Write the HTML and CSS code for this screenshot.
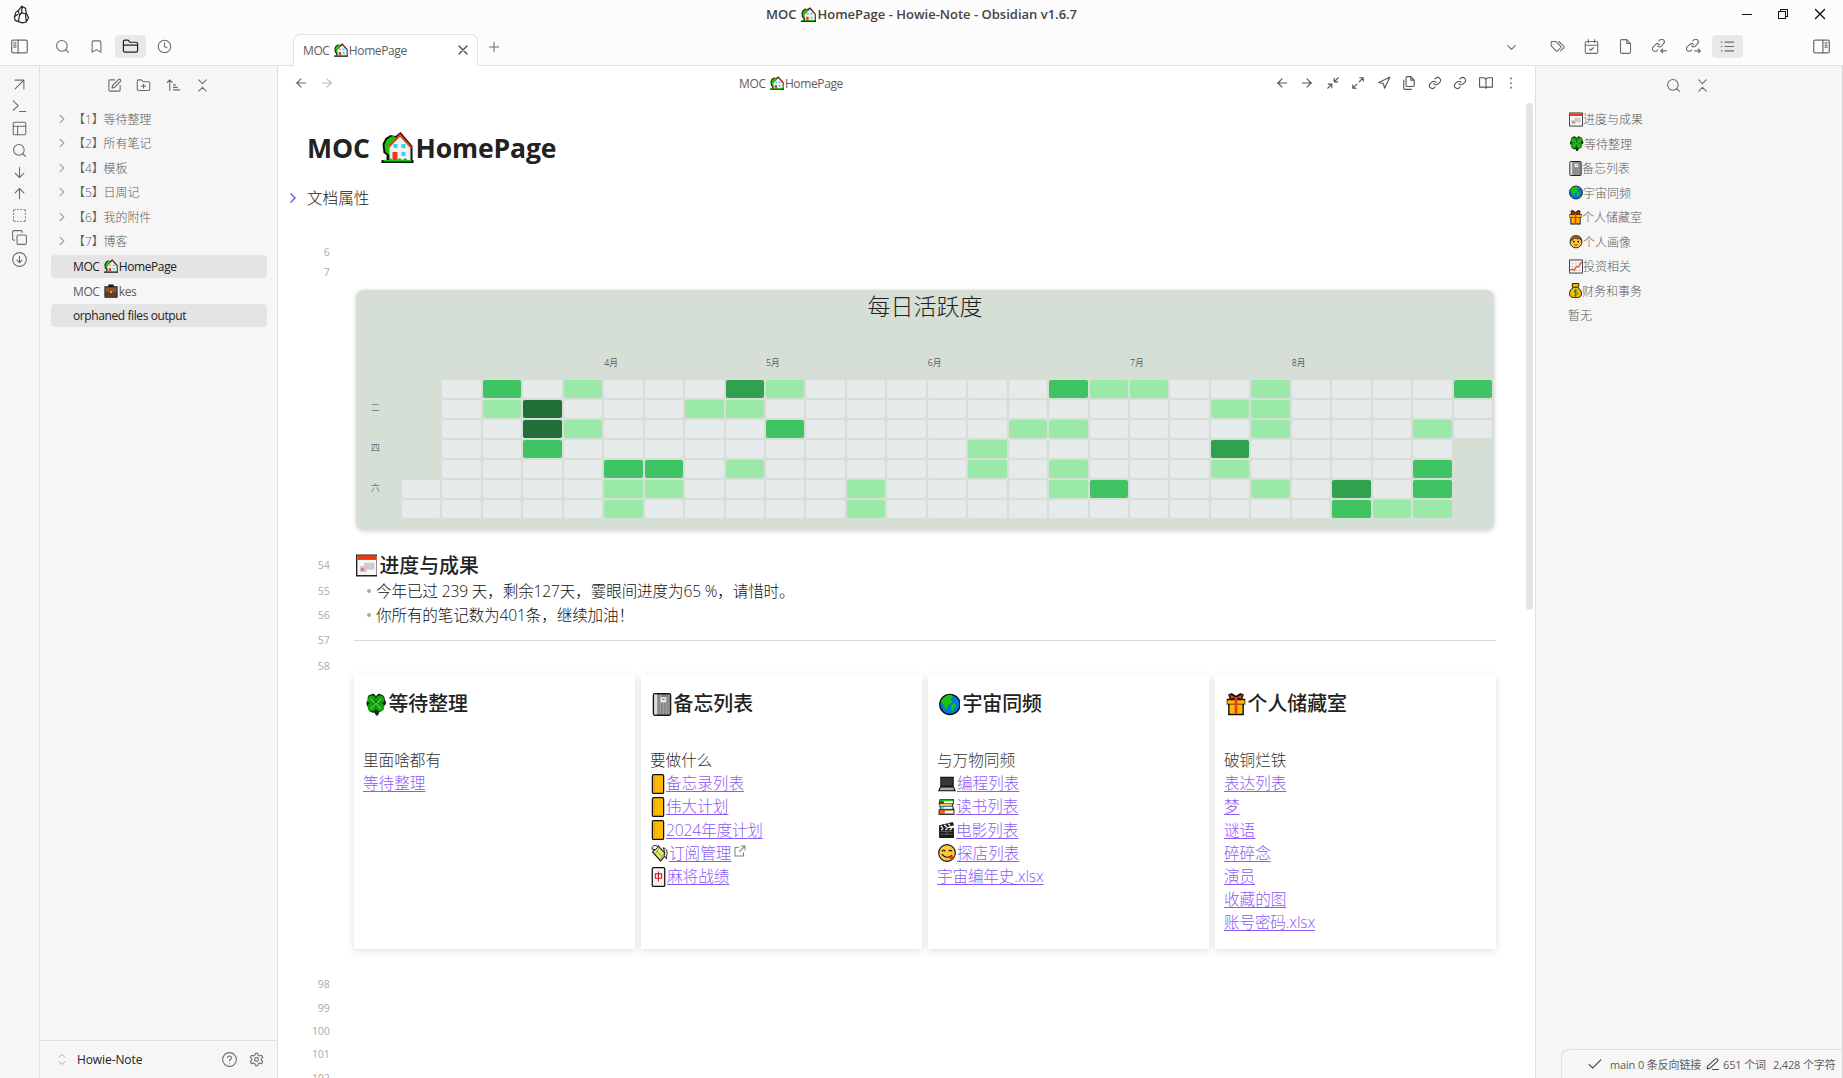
FILE: index.html
```html
<!DOCTYPE html>
<html lang="zh-CN">
<head>
<meta charset="utf-8">
<title>MOC HomePage - Howie-Note - Obsidian v1.6.7</title>
<link rel="stylesheet" href="styles.css">
</head>
<body>
<svg class="defs" aria-hidden="true">
  <!-- line icons -->
  <symbol id="search" viewBox="0 0 24 24"><circle cx="11" cy="11" r="8.5"/><path d="m21.5 21.5-4.3-4.3"/></symbol>
  <symbol id="bookmark" viewBox="0 0 24 24"><path d="m19 21-7-4-7 4V5a2 2 0 0 1 2-2h10a2 2 0 0 1 2 2v16z"/></symbol>
  <symbol id="folder" viewBox="0 0 24 24"><path d="M4 20h16a2 2 0 0 0 2-2V8a2 2 0 0 0-2-2h-7.9a2 2 0 0 1-1.7-.9l-.8-1.2A2 2 0 0 0 7.900 3H4a2 2 0 0 0-2 2v13c0 1.100.9 2 2 2Z"/><path d="M2 10h20"/></symbol>
  <symbol id="folder-plus" viewBox="0 0 24 24"><path d="M4 20h16a2 2 0 0 0 2-2V8a2 2 0 0 0-2-2h-7.900a2 2 0 0 1-1.700-.9l-.8-1.200A2 2 0 0 0 7.900 3H4a2 2 0 0 0-2 2v13a2 2 0 0 0 2 2Z"/><path d="M12 10v6M9 13h6"/></symbol>
  <symbol id="clock" viewBox="0 0 24 24"><circle cx="12" cy="12" r="10"/><path d="M12 6v6l4 2"/></symbol>
  <symbol id="panel-left" viewBox="0 0 24 24"><rect x="1" y="3" width="22" height="18" rx="2"/><path d="M10 3v18M4 7h3M4 10h3M4 13h3"/></symbol>
  <symbol id="panel-right" viewBox="0 0 24 24"><rect x="1" y="3" width="22" height="18" rx="2"/><path d="M14 3v18M17 7h3M17 10h3M17 13h3"/></symbol>
  <symbol id="x" viewBox="0 0 24 24"><path d="M18 6 6 18M6 6l12 12"/></symbol>
  <symbol id="plus" viewBox="0 0 24 24"><path d="M12 4v16M4 12h16"/></symbol>
  <symbol id="down" viewBox="0 0 24 24"><path d="m6 9 6 6 6-6"/></symbol>
  <symbol id="right" viewBox="0 0 24 24"><path d="m9 18 6-6-6-6"/></symbol>
  <symbol id="updown" viewBox="0 0 24 24"><path d="m7 15.500 5 5 5-5M7 8.500l5-5 5 5"/></symbol>
  <symbol id="arrow-ur" viewBox="0 0 24 24"><path d="M5 5h14v14M19 5 5 19"/></symbol>
  <symbol id="terminal" viewBox="0 0 24 24"><path d="m2 18 8-7.500L2 3M12 20h10"/></symbol>
  <symbol id="layout" viewBox="0 0 24 24"><rect x="2" y="2" width="20" height="20" rx="2"/><path d="M2 8.500h20M9 22V8.500"/></symbol>
  <symbol id="arrow-down" viewBox="0 0 24 24"><path d="M12 4v16M19 13l-7 7-7-7"/></symbol>
  <symbol id="arrow-up" viewBox="0 0 24 24"><path d="M12 20V4M5 11l7-7 7 7"/></symbol>
  <symbol id="arrow-left" viewBox="0 0 24 24"><path d="M20 12H4M12 19l-7-7 7-7"/></symbol>
  <symbol id="arrow-right" viewBox="0 0 24 24"><path d="M4 12h16M12 5l7 7-7 7"/></symbol>
  <symbol id="select" viewBox="0 0 24 24"><path d="M5 2.500a2.500 2.500 0 0 0-2.500 2.500M19 2.500a2.500 2.500 0 0 1 2.500 2.500M21.500 19a2.500 2.500 0 0 1-2.500 2.500M5 21.500a2.500 2.500 0 0 1-2.500-2.500M9 2.500h1M14 2.500h1M9 21.500h1M14 21.500h1M2.500 9v1M21.500 9v1M2.500 14v1M21.500 14v1"/></symbol>
  <symbol id="copy" viewBox="0 0 24 24"><rect x="8" y="8" width="15" height="15" rx="2"/><path d="M4 16a2 2 0 0 1-3-2V3a2 2 0 0 1 2-2h11a2 2 0 0 1 2 3"/></symbol>
  <symbol id="circle-down" viewBox="0 0 24 24"><circle cx="12" cy="12" r="11"/><path d="M12 7v10M8 13l4 4 4-4"/></symbol>
  <symbol id="edit" viewBox="0 0 24 24"><path d="M12 3H5a2 2 0 0 0-2 2v14a2 2 0 0 0 2 2h14a2 2 0 0 0 2-2v-7M18.400 2.600a2.100 2.100 0 0 1 3 3L12 15l-4 1 1-4Z"/></symbol>
  <symbol id="sort" viewBox="0 0 24 24"><path d="m2 7 4-4 4 4M6 3v17M12 11h3M12 15h6M12 19h10"/></symbol>
  <symbol id="collapse" viewBox="0 0 24 24"><path d="m6 21 6-6 6 6M6 3l6 6 6-6"/></symbol>
  <symbol id="minimize" viewBox="0 0 24 24"><path d="M4 14h6v6M20 10h-6V4M14 10l7-7M3 21l7-7"/></symbol>
  <symbol id="maximize" viewBox="0 0 24 24"><path d="M15 3h6v6M9 21H3v-6M21 3l-7 7M3 21l7-7"/></symbol>
  <symbol id="send" viewBox="0 0 24 24"><path d="m3 11 19-9-9 19-2-8-8-2z"/></symbol>
  <symbol id="files" viewBox="0 0 24 24"><path d="M15 1H9a2 2 0 0 0-2 2v13a2 2 0 0 0 2 2h10a2 2 0 0 0 2-2V7ZM15 1v6h6M3 7v14a2 2 0 0 0 2 2h11"/></symbol>
  <symbol id="link" viewBox="0 0 24 24"><path d="M10 13a5 5 0 0 0 7.500.5l3-3a5 5 0 0 0-7-7l-1.700 1.700M14 11a5 5 0 0 0-7.500-.5l-3 3a5 5 0 0 0 7 7l1.700-1.700"/></symbol>
  <symbol id="link-in" viewBox="0 0 24 24"><path d="M9 11a4 4 0 0 0 6 .5l3.500-4a4 4 0 0 0-6-6L11 3M12 9a4 4 0 0 0-6-.5l-4 4a4 4 0 0 0 6 6l1-1M23 19h-9M17 16l-3 3 3 3"/></symbol>
  <symbol id="link-out" viewBox="0 0 24 24"><path d="M9 11a4 4 0 0 0 6 .5l3.500-4a4 4 0 0 0-6-6L11 3M12 9a4 4 0 0 0-6-.5l-4 4a4 4 0 0 0 6 6l1-1M14 19h9M20 16l3 3-3 3"/></symbol>
  <symbol id="book" viewBox="0 0 24 24"><path d="M1 3h7a4 4 0 0 1 4 4v14a3 3 0 0 0-3-2H1zM23 3h-7a4 4 0 0 0-4 4v14a3 3 0 0 1 3-2h8z"/></symbol>
  <symbol id="more" viewBox="0 0 24 24"><path d="M12 4v.5M12 12v.5M12 20v.5"/></symbol>
  <symbol id="tags" viewBox="0 0 24 24"><path d="M2 5v6l7.500 8a1.800 1.800 0 0 0 2.600 0l4.900-5a1.800 1.800 0 0 0 0-2.600L9 4H3a1 1 0 0 0-1 1ZM5.500 8v.1M14 4l8 7.500a1.800 1.800 0 0 1 0 2.600L17 19"/></symbol>
  <symbol id="calendar" viewBox="0 0 24 24"><rect x="2" y="4" width="20" height="19" rx="2"/><path d="M7 1v5M17 1v5M2 10h20M9 16l2 2 4-4"/></symbol>
  <symbol id="file" viewBox="0 0 24 24"><path d="M14 1H6a2 2 0 0 0-2 2v18a2 2 0 0 0 2 2h12a2 2 0 0 0 2-2V7ZM14 1v6h6"/></symbol>
  <symbol id="list" viewBox="0 0 24 24"><path d="M8 5h14M8 12h14M8 19h14M2 5h1M2 12h1M2 19h1"/></symbol>
  <symbol id="help" viewBox="0 0 24 24"><circle cx="12" cy="12" r="11"/><path d="M9 9a3 3 0 0 1 6 .7c0 2-3 2.600-3 4.300M12 17.500v.1"/></symbol>
  <symbol id="gear" viewBox="0 0 24 24"><path d="M10 2h4l.7 3.200 2 1.100L20 5.200l2 3.500-2.400 2.200v2.200l2.400 2.200-2 3.500-3.300-1.100-2 1.100L14 22h-4l-.7-3.200-2-1.100L4 18.800l-2-3.500 2.400-2.200v-2.200L2 8.700l2-3.500 3.300 1.100 2-1.100Z"/><circle cx="12" cy="12" r="3"/></symbol>
  <symbol id="check" viewBox="0 0 24 24"><path d="m2 13 6 6L22 5"/></symbol>
  <symbol id="pen" viewBox="0 0 24 24"><path d="M12 22h11M17 3a2.800 2.800 0 0 1 4 4L7 20l-5 1 1-5Z"/></symbol>
  <symbol id="external" viewBox="0 0 24 24"><path d="M14 2h8v8M22 2 11 13M9 5H2v17h17v-7"/></symbol>
  <symbol id="logo" viewBox="0 0 24 24"><path d="M8 7 12.500 1.500 17 4l1 6 3 6-3 5.500-5 1-4.500-1.500L4 19.500 3 15l2-6ZM8 7l1.500 6L8 21M13 2l-1 8-2.500 3M12 10l5 1 1 10M3 15l4-3"/></symbol>

  <!-- pictograms -->
  <symbol id="e-house" viewBox="0 0 32 32"><path d="M9 3 4 6 1 12l1 9 3 2v5H0v3h32v-3h-1V14L19 0l-5 4Z" fill="#111"/><path d="m9 5-4 3-2 5 1 7 4 3 4-9 4-7-4-3Z" fill="#16c60c"/><path d="M8 15 19 4l10 11v13H8Z" fill="#f2f2f2"/><path d="M7 15 18.500 3 30 16" fill="none" stroke="#f03a17" stroke-width="2"/><path d="M12 12h4v4h-4zM20 12h4v4h-4zM20 20h4v4h-4z" fill="#31d2f7"/><path d="M11 20h5v9h-5z" fill="#f03a17"/><path d="M2 28h6l1-2 2 2h5l2-2 3 2 3-2 2 2h4v1.500H2Z" fill="#16c60c"/></symbol>
  <symbol id="e-case" viewBox="0 0 32 32"><path d="M10 5V1h12v4h9v24q0 2-2 2H3q-2 0-2-2V5Z" fill="#18110e"/><path d="M3 7h26v11H3z" fill="#8e562e"/><path d="M3 18h26v11H3z" fill="#603d30"/><circle cx="16" cy="18" r="2.500" fill="#ffb900"/></symbol>
  <symbol id="e-cal" viewBox="0 0 32 32"><path d="M1 1h30v30H1z" fill="#f7f7f7" stroke="#222" stroke-width="2"/><path d="M2 2h28v6H2z" fill="#f03a17"/><path d="M12 12h15v10H16v4H6v-9h6z" fill="#ccc"/><path d="M7 20h5v4H7z" fill="#f66"/></symbol>
  <symbol id="e-clover" viewBox="0 0 32 32"><path d="M16 4q4-6 8-2 5 1 5 7 4 6-1 9 0 8-7 9l-2 5h-3l-2-4q-9 1-10-9-4-4 0-9Q3 2 8 2q5-4 8 2Z" fill="#0a2d08"/><g fill="#13a10e"><circle cx="10" cy="9" r="6"/><circle cx="22" cy="9" r="6"/><circle cx="10" cy="20" r="6"/><circle cx="22" cy="20" r="6"/></g><path d="m8 8 16 15M24 8 8 23" stroke="#5dd657" stroke-width="1.500"/></symbol>
  <symbol id="e-note" viewBox="0 0 26 32"><rect x="1" y="1" width="24" height="30" rx="2" fill="#888" stroke="#151515" stroke-width="2"/><path d="M2 2h4v28H2z" fill="#ddd"/><path d="M7 3v26M11 2v28M15 14v16M19 14v16M23 2v28" stroke="#bbb" stroke-dasharray="2 1"/><path d="M11 6h8v7h-8z" fill="#eee"/><path d="M13 9h4" stroke="#444"/></symbol>
  <symbol id="e-globe" viewBox="0 0 32 32"><circle cx="16" cy="16" r="14.800" fill="#0078d7" stroke="#111" stroke-width="2"/><path d="M4 9q5-7 14-7l2 3-3 4 3 3-4 4-3 1-1 6-3-1-2-6-4-3ZM18 16l5-2 3 4-4 3-2 6-2-4Z" fill="#16c60c"/></symbol>
  <symbol id="e-gift" viewBox="0 0 28 32"><path d="M1 8h4L3 2l5-2 6 4 6-4 5 2-2 6h4v8h-2v15H3V16H1Z" fill="#111"/><path d="M2 10h24v5H2zM5 16h18v13H5z" fill="#ffb900"/><path d="M12 6h4v23h-4zM5 2l8 4-6 2ZM23 2l-8 4 6 2Z" fill="#f03a17"/></symbol>
  <symbol id="e-man" viewBox="0 0 32 32"><circle cx="16" cy="17" r="13.500" fill="#ffc83d" stroke="#111" stroke-width="2"/><path d="M3 15Q3 2 16 2t13 13l-4-5q-7 1-12-2-3 5-10 7Z" fill="#8e562e" stroke="#111"/><circle cx="11" cy="16" r="2"/><circle cx="21" cy="16" r="2"/><path d="M10 22q6 6 12 0Z" fill="#8e562e"/></symbol>
  <symbol id="e-chart" viewBox="0 0 32 32"><path d="M1 1h30v30H1z" fill="#f7f7f7" stroke="#222" stroke-width="2"/><path d="M8 2v28M16 2v28M24 2v28M2 9h28M2 17h28M2 25h28" stroke="#ccc"/><path d="m3 24 5-2 4 3 5-9 4 1 8-11" fill="none" stroke="#f03a17" stroke-width="2.500"/></symbol>
  <symbol id="e-bag" viewBox="0 0 28 32"><path d="M7 1h14v6l-2 3q8 4 8 12 0 9-9 9h-8q-9 0-9-9 0-8 8-12L7 7Z" fill="#ffb900" stroke="#111" stroke-width="2"/><path d="M8 9h12" stroke="#111" stroke-width="2"/><path d="M18 16h-4q-4 0-3 3t6 2-1 5h-5M14 13v16" fill="none" stroke="#10893e" stroke-width="2"/></symbol>
  <symbol id="e-ledger" viewBox="0 0 20 32"><rect x="1" y="1" width="18" height="30" rx="2" fill="#ffb900" stroke="#111" stroke-width="2"/><path d="M4 2v28" stroke="#d88c00"/></symbol>
  <symbol id="e-wings" viewBox="0 0 32 32"><path d="m14 3 15 16-11 12L3 14Z" fill="#e3e96b" stroke="#111" stroke-width="2"/><path d="m10 11 13 14m-6-20-8 12m17-2-8 12" stroke="#8a9a26" stroke-width="1.500"/><path d="M2 9Q1 1 9 2l5 2-6 6ZM23 6q9 2 7 12l-1 9-4-6 1-7Z" fill="#f2f2f2" stroke="#111" stroke-width="1.600"/></symbol>
  <symbol id="e-tile" viewBox="0 0 22 32"><rect x="1" y="1" width="20" height="30" rx="2" fill="#f2f2f2" stroke="#111" stroke-width="2"/><path d="M6 11h10v7H6zM11 7v16" fill="none" stroke="#e81224" stroke-width="1.700"/></symbol>
  <symbol id="e-laptop" viewBox="0 0 32 32"><path d="M4 3h24v17l4 9H0l4-9Z" fill="#111"/><path d="M6 5h20v14H6z" fill="#383838"/><path d="m5 22-2 5h26l-2-5Z" fill="#aaa"/></symbol>
  <symbol id="e-books" viewBox="0 0 32 32"><path d="M3 1h27v10l-2 1 3 9v10H1V21l3-2-3-8Z" fill="#333"/><path d="M4 2h24v4H4z" fill="#16c60c"/><path d="M11 5h17v4H11z" fill="#fff"/><path d="M3 10h23v4H3z" fill="#ffc83d"/><path d="M5 15h22v5H5z" fill="#69c7ff"/><path d="M12 16h15v3H12z" fill="#fff"/><path d="M3 22h26v7H3z" fill="#f7630c"/><path d="M13 23h16v5H13z" fill="#fff"/></symbol>
  <symbol id="e-clap" viewBox="0 0 32 32"><path d="m2 7 26-6 2 6-18 5h18v19H2Z" fill="#1b1b1b"/><path d="m5 8 4 4m3-6 4 4m3-6 4 4M6 16l4-3m4 3 4-3m4 3 4-3" stroke="#fff" stroke-width="2.500"/><path d="M5 19h22M5 24h22M17 19v5" stroke="#999"/></symbol>
  <symbol id="e-yum" viewBox="0 0 32 32"><circle cx="16" cy="16" r="14.800" fill="#ffc83d" stroke="#111" stroke-width="2"/><path d="M7 13q3-4 6 0m6 0q3-4 6 0M7 18q8 10 18 2" fill="none" stroke="#111" stroke-width="2"/><path d="m19 24 6-4q4 4 1 7-5 2-7-3Z" fill="#f03a17"/></symbol>
</svg>

<div class="app">
  <header class="titlebar">
    <svg class="ic logo"><use href="#logo"/></svg>
    <div class="window-title">MOC <svg class="em"><use href="#e-house"/></svg>HomePage - Howie-Note - Obsidian v1.6.7</div>
    <div class="window-controls"><i class="min"></i><i class="restore"></i><svg class="ic"><use href="#x"/></svg></div>
  </header>

  <nav class="tabbar">
    <div class="tabs-left">
      <span class="tb toggle"><svg class="ic"><use href="#panel-left"/></svg></span>
      <span class="tb"><svg class="ic"><use href="#search"/></svg></span>
      <span class="tb"><svg class="ic"><use href="#bookmark"/></svg></span>
      <span class="tb active"><svg class="ic"><use href="#folder"/></svg></span>
      <span class="tb"><svg class="ic"><use href="#clock"/></svg></span>
    </div>
    <div class="tabs-main">
      <div class="tab"><span>MOC <svg class="em"><use href="#e-house"/></svg>HomePage</span><svg class="ic"><use href="#x"/></svg></div>
      <svg class="ic new"><use href="#plus"/></svg>
      <svg class="ic more-tabs"><use href="#down"/></svg>
    </div>
    <div class="tabs-right">
      <span class="tb"><svg class="ic"><use href="#tags"/></svg></span>
      <span class="tb"><svg class="ic"><use href="#calendar"/></svg></span>
      <span class="tb"><svg class="ic"><use href="#file"/></svg></span>
      <span class="tb"><svg class="ic"><use href="#link-in"/></svg></span>
      <span class="tb"><svg class="ic"><use href="#link-out"/></svg></span>
      <span class="tb active"><svg class="ic"><use href="#list"/></svg></span>
      <span class="tb toggle"><svg class="ic"><use href="#panel-right"/></svg></span>
    </div>
  </nav>

  <div class="workspace">
    <aside class="ribbon">
      <svg class="ic"><use href="#arrow-ur"/></svg>
      <svg class="ic"><use href="#terminal"/></svg>
      <svg class="ic"><use href="#layout"/></svg>
      <svg class="ic"><use href="#search"/></svg>
      <svg class="ic"><use href="#arrow-down"/></svg>
      <svg class="ic"><use href="#arrow-up"/></svg>
      <svg class="ic"><use href="#select"/></svg>
      <svg class="ic"><use href="#copy"/></svg>
      <svg class="ic"><use href="#circle-down"/></svg>
    </aside>

    <aside class="sidebar">
      <div class="side-tools">
        <svg class="ic"><use href="#edit"/></svg>
        <svg class="ic"><use href="#folder-plus"/></svg>
        <svg class="ic"><use href="#sort"/></svg>
        <svg class="ic"><use href="#collapse"/></svg>
      </div>
      <div class="tree">
        <div class="item"><svg class="ic"><use href="#right"/></svg>【1】等待整理</div>
        <div class="item"><svg class="ic"><use href="#right"/></svg>【2】所有笔记</div>
        <div class="item"><svg class="ic"><use href="#right"/></svg>【4】模板</div>
        <div class="item"><svg class="ic"><use href="#right"/></svg>【5】日周记</div>
        <div class="item"><svg class="ic"><use href="#right"/></svg>【6】我的附件</div>
        <div class="item"><svg class="ic"><use href="#right"/></svg>【7】博客</div>
        <div class="item file selected"><span>MOC <svg class="em"><use href="#e-house"/></svg>HomePage</span></div>
        <div class="item file"><span>MOC <svg class="em"><use href="#e-case"/></svg>kes</span></div>
        <div class="item file selected"><span>orphaned files output</span></div>
      </div>
      <div class="vault">
        <svg class="ic switch"><use href="#updown"/></svg>
        <span>Howie-Note</span>
        <svg class="ic"><use href="#help"/></svg>
        <svg class="ic"><use href="#gear"/></svg>
      </div>
    </aside>

    <main class="pane">
      <div class="view-header">
        <div class="nav"><svg class="ic"><use href="#arrow-left"/></svg><svg class="ic dim"><use href="#arrow-right"/></svg></div>
        <div class="view-title">MOC <svg class="em"><use href="#e-house"/></svg>HomePage</div>
        <div class="actions">
          <svg class="ic"><use href="#arrow-left"/></svg>
          <svg class="ic"><use href="#arrow-right"/></svg>
          <svg class="ic"><use href="#minimize"/></svg>
          <svg class="ic"><use href="#maximize"/></svg>
          <svg class="ic"><use href="#send"/></svg>
          <svg class="ic"><use href="#files"/></svg>
          <svg class="ic"><use href="#link"/></svg>
          <svg class="ic"><use href="#link"/></svg>
          <svg class="ic"><use href="#book"/></svg>
          <svg class="ic dots"><use href="#more"/></svg>
        </div>
      </div>
      <div class="scroller">
      <div class="editor">
        <h1>MOC <svg class="em"><use href="#e-house"/></svg>HomePage</h1>
        <div class="props"><svg class="ic"><use href="#right"/></svg>文档属性</div>
        <div class="line first"><b>6</b></div>
        <div class="line short"><b>7</b></div>

        <section class="heat">
          <div class="heat-title">每日活跃度</div>
          <div class="months"><span class="m4">4月</span><span class="m5">5月</span><span class="m6">6月</span><span class="m7">7月</span><span class="m8">8月</span></div>
          <div class="heat-body">
            <div class="days"><span></span><span>二</span><span></span><span>四</span><span></span><span>六</span><span></span></div>
            <div class="cells" id="cells"></div>
          </div>
        </section>

        <div class="line heading"><b>54</b><h3><svg class="em"><use href="#e-cal"/></svg>进度与成果</h3></div>
        <div class="line"><b>55</b><div class="bullet">今年已过 239 天，剩余127天，霎眼间进度为65 %，请惜时。</div></div>
        <div class="line"><b>56</b><div class="bullet">你所有的笔记数为401条，继续加油！</div></div>
        <div class="line rule"><b>57</b><hr></div>
        <div class="line before-cards"><b>58</b></div>

        <div class="cards">
          <article><h3><svg class="em"><use href="#e-clover"/></svg>等待整理</h3>
            <p>里面啥都有</p><p><a>等待整理</a></p></article>
          <article><h3><svg class="em w-note"><use href="#e-note"/></svg>备忘列表</h3>
            <p>要做什么</p>
            <p><svg class="em w-ledger"><use href="#e-ledger"/></svg><a>备忘录列表</a></p>
            <p><svg class="em w-ledger"><use href="#e-ledger"/></svg><a>伟大计划</a></p>
            <p><svg class="em w-ledger"><use href="#e-ledger"/></svg><a class="latin">2024年度计划</a></p>
            <p><svg class="em"><use href="#e-wings"/></svg><a>订阅管理</a><svg class="ic ext"><use href="#external"/></svg></p>
            <p><svg class="em w-tile"><use href="#e-tile"/></svg><a>麻将战绩</a></p></article>
          <article><h3><svg class="em"><use href="#e-globe"/></svg>宇宙同频</h3>
            <p>与万物同频</p>
            <p><svg class="em wide"><use href="#e-laptop"/></svg><a>编程列表</a></p>
            <p><svg class="em"><use href="#e-books"/></svg><a>读书列表</a></p>
            <p><svg class="em"><use href="#e-clap"/></svg><a>电影列表</a></p>
            <p><svg class="em wide"><use href="#e-yum"/></svg><a>探店列表</a></p>
            <p><a class="latin">宇宙编年史.xlsx</a></p></article>
          <article><h3><svg class="em w-gift"><use href="#e-gift"/></svg>个人储藏室</h3>
            <p>破铜烂铁</p><p><a>表达列表</a></p><p><a>梦</a></p><p><a>谜语</a></p><p><a>碎碎念</a></p><p><a>演员</a></p><p><a>收藏的图</a></p><p><a class="latin">账号密码.xlsx</a></p></article>
        </div>

        <div class="line after-cards"><b>98</b></div>
        <div class="line tail"><b>99</b></div>
        <div class="line tail"><b>100</b></div>
        <div class="line tail"><b>101</b></div>
        <div class="line tail"><b>102</b></div>
      </div>
      <div class="scrollbar"></div>
      </div>
    </main>

    <aside class="outline">
      <div class="outline-tools"><svg class="ic"><use href="#search"/></svg><svg class="ic"><use href="#collapse"/></svg></div>
      <ul>
        <li><svg class="em"><use href="#e-cal"/></svg>进度与成果</li>
        <li><svg class="em w-clover"><use href="#e-clover"/></svg>等待整理</li>
        <li><svg class="em w-note"><use href="#e-note"/></svg>备忘列表</li>
        <li><svg class="em"><use href="#e-globe"/></svg>宇宙同频</li>
        <li><svg class="em w-gift"><use href="#e-gift"/></svg>个人储藏室</li>
        <li><svg class="em"><use href="#e-man"/></svg>个人画像</li>
        <li><svg class="em"><use href="#e-chart"/></svg>投资相关</li>
        <li><svg class="em w-bag"><use href="#e-bag"/></svg>财务和事务</li>
        <li>暂无</li>
      </ul>
      <div class="status">
        <svg class="ic"><use href="#check"/></svg><span class="branch">main</span><span class="back">0 条反向链接</span>
        <svg class="ic pen"><use href="#pen"/></svg><span class="words">651 个词</span><span class="chars">2,428 个字符</span>
      </div>
    </aside>
  </div>
</div>
<script src="heatmap.js"></script>
</body>
</html>
```
FILE: styles.css
```css
* { box-sizing: border-box; }
body {
  margin: 0;
  width: 1843px;
  height: 1078px;
  overflow: hidden;
  font-family: "Open Sans", "Noto Sans CJK SC", sans-serif;
  font-size: 12px;
  color: #222;
  background: #fff;
}
.defs { display: none; }
.app { display: flex; flex-direction: column; height: 1078px; }

.ic {
  width: 15px; height: 15px; flex: none; display: block;
  fill: none; stroke: #6b6b6b; stroke-width: 1.7;
  stroke-linecap: round; stroke-linejoin: round;
}
.em { display: inline-block; width: 1.17em; height: 1.2em; vertical-align: -0.24em; margin: 0 1px 0 1.5px; }
h1, h3, p, ul { margin: 0; padding: 0; }

/* title bar */
.titlebar {
  height: 28px; flex: none; background: #fcfcfc;
  display: grid; grid-template-columns: 300px 1fr 300px; align-items: center;
}
.logo { width: 19px; height: 19px; margin-left: 12px; stroke: #222; stroke-width: 1.5; }
.window-title { text-align: center; font-weight: 600; font-size: 13px; line-height: 28px; color: #444; white-space: nowrap; }
.window-controls { display: flex; justify-content: flex-end; align-items: center; gap: 26px; padding-right: 14px; }
.window-controls .ic { stroke: #111; width: 18px; height: 18px; stroke-width: 1.8; margin-left: -3px; }
.min { width: 10px; height: 1px; background: #111; }
.restore { width: 8px; height: 8px; border: 1px solid #111; box-shadow: 2px -2px 0 -1px #fcfcfc, 2px -2px 0 0 #111; margin: 2px 2px 0 0; }

/* tab bar */
.tabbar { height: 38px; flex: none; background: #fcfcfc; border-bottom: 1px solid #e0e0e0; display: flex; }
.tb { width: 31px; height: 23px; border-radius: 4px; display: flex; align-items: center; justify-content: center; }
.tb.active { background: #e9e9e9; }
.tabs-left { width: 278px; display: flex; gap: 3px; padding: 7px 0 0 4px; }
.tabs-left .toggle { margin-right: 9px; }
.tabs-left .toggle .ic, .tabs-right .toggle .ic { width: 17px; height: 17px; }
.tabs-left .active .ic { stroke: #222; width: 17px; height: 17px; }
.tabs-main { flex: 1; display: flex; padding: 6px 0 0 15px; }
.tab {
  width: 185px; height: 32px; background: #fff; border: 1px solid #e0e0e0; border-bottom: 0;
  border-radius: 7px 7px 0 0; display: flex; align-items: center; justify-content: space-between;
  padding: 0 6px 1px 9px; color: #5c5c5c; letter-spacing: -0.38px; white-space: nowrap;
}
.tab .ic { width: 16px; height: 16px; stroke: #444; stroke-width: 1.9; }
.tabs-main .new { margin: 6px 0 0 9px; width: 14px; height: 14px; }
.more-tabs { margin: 6px 17px 0 auto; }
.tabs-right { width: 307px; display: flex; gap: 3px; padding: 7px 6px 0 6px; }
.tabs-right .toggle { margin-left: auto; }

.workspace { flex: 1; display: flex; min-height: 0; }

/* ribbon */
.ribbon { width: 40px; border-right: 1px solid #e0e0e0; background: #f6f6f6; display: flex; flex-direction: column; align-items: center; gap: 6.9px; padding-top: 11px; }

/* file explorer */
.sidebar { width: 238px; border-right: 1px solid #e0e0e0; background: #f6f6f6; display: flex; flex-direction: column; }
.side-tools { display: flex; gap: 14.3px; padding: 12px 0 0 67px; }
.tree { padding: 15px 10px 0 11px; display: flex; flex-direction: column; gap: 1.5px; flex: 1; }
.item { height: 23px; border-radius: 4px; display: flex; align-items: center; color: #5c5c5c; font-weight: 300; padding: 0 0 1.4px 4px; white-space: nowrap; letter-spacing: -0.08px; }
.item .ic { width: 14px; height: 14px; stroke: #aaa; stroke-width: 2.4; margin-right: 4px; }
.file { padding: 0 0 0 22px; letter-spacing: -0.4px; font-weight: 400; }
.selected { background: #e4e4e4; color: #222; }
.vault { height: 38px; border-top: 1px solid #e0e0e0; display: flex; align-items: center; padding: 0 13px 0 15px; }
.vault span { flex: 1; font-weight: 500; padding-left: 8px; letter-spacing: -0.1px; }
.vault .switch { stroke: #aaa; width: 14px; }
.vault .ic + .ic { margin-left: 12px; }

/* note pane */
.pane { width: 1258px; border-right: 1px solid #e0e0e0; background: #fff; display: flex; flex-direction: column; overflow: hidden; }
.view-header { height: 34px; flex: none; display: grid; grid-template-columns: 300px 1fr 300px; align-items: center; padding: 0 17px 0 16px; }
.nav { display: flex; gap: 12px; }
.nav .ic { width: 14px; height: 14px; stroke-width: 1.9; }
.nav .dim { stroke: #bbb; }
.view-title { text-align: center; color: #5c5c5c; padding-right: 230px; letter-spacing: -0.38px; white-space: nowrap; }
.actions { display: flex; justify-content: flex-end; gap: 11.5px; }
.actions .ic { width: 14px; height: 14px; stroke: #555; stroke-width: 1.9; }
.actions .dots { stroke-width: 2.8; }
.scroller { flex: 1; display: flex; min-height: 0; overflow: hidden; }
.scrollbar { width: 7px; height: 507px; margin: 3px 2px 0 auto; border-radius: 4px; background: #e4e4e4; flex: none; }
.editor { width: 1218px; flex: none; font-size: 15.6px; }
.editor h1 { margin: 30px 0 0 29px; height: 36px; line-height: 36px; font-size: 26.6px; font-weight: 700; letter-spacing: -0.15px; white-space: nowrap; }
.editor h1 .em { width: 33px; height: 32px; margin: 0 2px 0 4px; }
.props { margin-top: 19px; height: 25px; padding: 0 0 0 7px; display: flex; align-items: center; font-weight: 300; }
.props .ic { width: 16px; height: 16px; stroke: #8a5cf5; stroke-width: 2.6; margin-right: 6px; }

.line { height: 24px; display: flex; align-items: center; }
.line b { width: 51.5px; margin-right: 24.5px; text-align: right; font-size: 10.6px; font-weight: 400; color: #ababab; letter-spacing: -0.2px; flex: none; }
.first { margin-top: 32px; height: 20px; }
.short { height: 20px; }
.heading { margin-top: 20px; height: 29px; }
.heading h3 { padding: 0 0 1px 0; }
.heading b { padding-top: 1px; }
.editor h3 { font-size: 19.9px; font-weight: 500; white-space: nowrap; }
.editor h3 .em { width: 1.1em; height: 1.15em; margin: 0 2px 0 1.5px; }
.bullet { display: flex; align-items: center; font-weight: 300; padding: 0 0 1px 13px; white-space: nowrap; letter-spacing: -0.15px; color: #111; }
.bullet::before { content: ""; width: 4px; height: 4px; border-radius: 50%; background: #ababab; margin-right: 5px; }
.rule { height: 26px; }
.rule hr { flex: 1; margin: 0; border: 0; height: 1px; background: #d8d8d8; }
.before-cards { height: 22px; padding-top: 4px; }
.after-cards { margin-top: 23px; }
.tail { height: 23.3px; }

/* activity heat map */
.heat { margin: 8px 0 0 78px; width: 1138px; height: 240px; border-radius: 8px; background: #d5dfd5; box-shadow: 0 1px 5px rgba(0,0,0,.2); padding: 0 2px 0 15px; }
.heat-title { height: 33px; line-height: 32px; text-align: center; font-size: 23px; font-weight: 300; padding-right: 13px; }
.months { margin: 33px 0 0 31px; height: 14px; display: grid; grid-template-columns: repeat(27, minmax(0, 1fr)); column-gap: 2px; font-size: 8.8px; font-weight: 300; line-height: 14px; letter-spacing: -0.1px; white-space: nowrap; }
.m4 { grid-column: 6; } .m5 { grid-column: 10; } .m6 { grid-column: 14; } .m7 { grid-column: 19; } .m8 { grid-column: 23; }
.heat-body { display: flex; margin-top: 10px; }
.days { width: 31px; display: grid; grid-auto-rows: 18px; row-gap: 2px; font-size: 8.8px; font-weight: 300; line-height: 17px; color: #444; }
.cells { flex: 1; display: grid; grid-template-columns: repeat(27, 1fr); grid-auto-rows: 18px; gap: 2px; }
.cells i { border-radius: 2px; background: #e6eaea; }
.cells .none { background: none; }
.cells .l1 { background: #9be9a8; }
.cells .l2 { background: #40c463; }
.cells .l3 { background: #30a14e; }
.cells .l4 { background: #216e39; }

/* link cards */
.cards { margin-left: 76px; width: 1142px; height: 274px; display: grid; grid-template-columns: repeat(4, 1fr); gap: 6px; }
.cards article { background: #fff; box-shadow: 0 2px 8px rgba(0,0,0,.12); padding: 14px 9px 0; }
.cards h3 { height: 30px; line-height: 30px; margin: 0 0 30px; }
.cards p { height: 23.2px; line-height: 23.2px; font-weight: 300; color: #333; white-space: nowrap; display: flex; align-items: center; }
.cards p .em { margin: 0 0 0 1px; width: 17px; height: 18px; }
.cards p .em + a { margin-left: 1px; }
.cards p .wide { width: 18px; margin-left: 1px; }
.cards a { color: #8a5cf5; text-decoration: underline; text-underline-offset: 2px; text-decoration-thickness: 1px; }
.cards .latin { letter-spacing: -0.15px; }
.editor h3 .w-note { width: 20px; }
.editor h3 .w-gift { width: 20px; }
.cards p .w-ledger { width: 14px; height: 20px; }
.cards p .w-tile { width: 15px; height: 20px; }
.ext { width: 12px; height: 12px; margin: -5px 0 0 3px; stroke: #888; stroke-width: 2.2; }

/* outline */
.outline { width: 307px; background: #f6f6f6; border-right: 1px solid #d4d4d4; display: flex; flex-direction: column; }
.outline-tools { display: flex; gap: 14px; padding: 12px 0 0 130px; }
.outline ul { list-style: none; flex: 1; padding: 15px 0 0 32px; display: flex; flex-direction: column; gap: 1.5px; font-weight: 300; color: #5c5c5c; }
.outline li { height: 23px; display: flex; align-items: center; white-space: nowrap; padding-bottom: 1px; }
.outline .em { width: 14px; height: 15px; margin: 0 0 0 1px; }
.outline .w-note, .outline .w-gift, .outline .w-bag { width: 13px; }
.outline .w-clover { width: 15px; }
.status { margin-left: 25px; height: 29px; border: 1px solid #e0e0e0; border-width: 1px 0 0 1px; border-radius: 8px 0 0 0; display: flex; align-items: center; padding-left: 26px; font-size: 11px; color: #5c5c5c; white-space: nowrap; letter-spacing: -0.15px; }
.status .ic { width: 14px; height: 14px; stroke: #444; stroke-width: 2; }
.status .branch { width: 28px; margin-left: 8px; }
.status .back { width: 65px; }
.status .pen { width: 13px; margin-left: 3px; }
.status .words { width: 50px; margin-left: 4px; }
```
FILE: heatmap.js
```js
// One entry per weekday, keyed by week column; the value is the activity level, 1 to 4.
const activity = [
  { 2: 2, 4: 1, 8: 3, 9: 1, 16: 2, 17: 1, 18: 1, 21: 1, 26: 2 },
  { 2: 1, 3: 4, 7: 1, 8: 1, 20: 1, 21: 1 },
  { 3: 4, 4: 1, 9: 2, 15: 1, 16: 1, 21: 1, 25: 1 },
  { 3: 2, 14: 1, 20: 3 },
  { 5: 2, 6: 2, 8: 1, 14: 1, 16: 1, 20: 1, 25: 2 },
  { 5: 1, 6: 1, 11: 1, 16: 1, 17: 2, 21: 1, 23: 3, 25: 2 },
  { 5: 1, 11: 1, 23: 2, 24: 1, 25: 1 }
];
const cells = document.getElementById("cells");
activity.forEach((row, day) => {
  for (let week = 0; week < 27; week++) {
    const cell = document.createElement("i");
    const outside = (week === 0 && day < 5) || (week === 26 && day > 2);
    cell.className = outside ? "none" : "l" + (row[week] || 0);
    cells.append(cell);
  }
});
```
